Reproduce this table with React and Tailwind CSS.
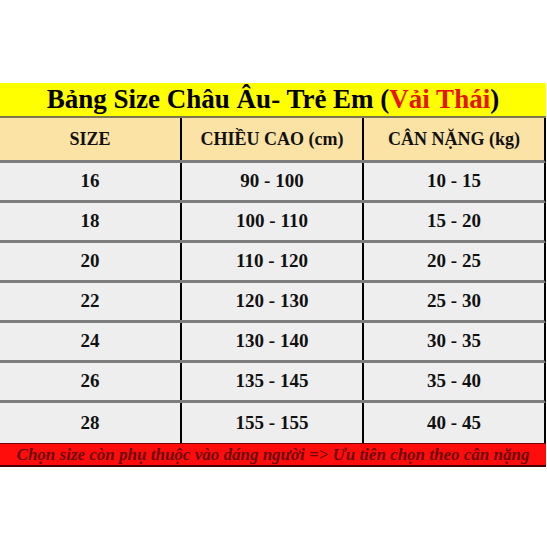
import React from "react";

const rows = [
  ["16", "90 - 100", "10 - 15"],
  ["18", "100 - 110", "15 - 20"],
  ["20", "110 - 120", "20 - 25"],
  ["22", "120 - 130", "25 - 30"],
  ["24", "130 - 140", "30 - 35"],
  ["26", "135 - 145", "35 - 40"],
  ["28", "155 - 155", "40 - 45"],
];

const App = () => {
  return (
    <div className="w-[547px] h-[547px] bg-white pt-[83px] font-['Liberation_Serif',serif]">
      <div className="w-[546px]">
        <div className="h-[35px] bg-[#ffff00] border-b-2 border-[#7b7850] flex items-center justify-center text-[27px] font-bold text-black leading-none">
          <span>
            Bảng Size Châu Âu- Trẻ Em (<span className="text-[#e8140c]">Vải Thái</span>)
          </span>
        </div>
        <div className="h-[45px] bg-[#fbe3a6] border-b-[3px] border-[#7d7d7d] border-r-2 border-r-black flex text-[18px] font-bold text-[#111]">
          <div className="w-[182px] flex items-center justify-center border-r-2 border-black">SIZE</div>
          <div className="w-[182px] flex items-center justify-center border-r-2 border-black">CHIỀU CAO (cm)</div>
          <div className="flex-1 flex items-center justify-center">CÂN NẶNG (kg)</div>
        </div>
        {rows.map((r, i) => (
          <div
            key={i}
            className={
              i < rows.length - 1
                ? "h-[40px] bg-[#eeeeee] border-b-[3px] border-[#7d7d7d] border-r-2 border-r-black flex text-[19px] font-bold text-[#111]"
                : "h-[40px] bg-[#eeeeee] border-r-2 border-r-black flex text-[19px] font-bold text-[#111]"
            }
          >
            <div className="w-[182px] flex items-center justify-center border-r-2 border-black">{r[0]}</div>
            <div className="w-[182px] flex items-center justify-center border-r-2 border-black">{r[1]}</div>
            <div className="flex-1 flex items-center justify-center">{r[2]}</div>
          </div>
        ))}
        <div className="h-[24px] bg-[#ff0d0d] border-t border-[#7a0000] border-b-2 border-b-[#4a0000] flex items-center justify-center text-[17px] font-bold italic text-[#6a0a0a] leading-none">
          Chọn size còn phụ thuộc vào dáng người =&gt; Ưu tiên chọn theo cân nặng
        </div>
      </div>
    </div>
  );
};

export default App;
